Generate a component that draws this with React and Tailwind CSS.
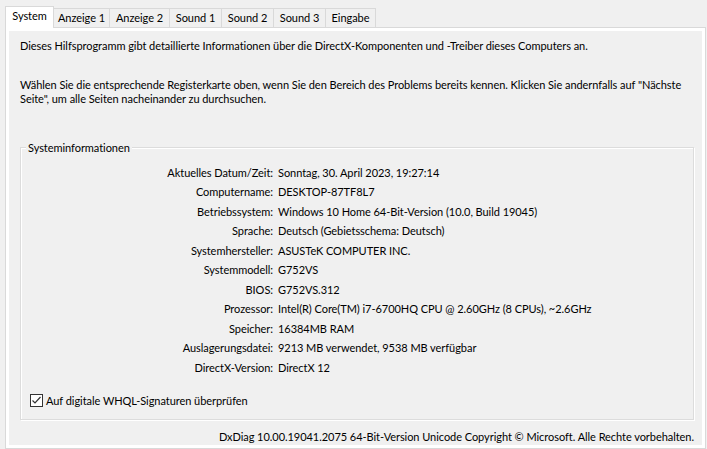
import React from "react";

const tabs = ["System", "Anzeige 1", "Anzeige 2", "Sound 1", "Sound 2", "Sound 3", "Eingabe"];
const tabWidths = [49, 56, 60, 52, 52, 52, 50];

const rows = [
  ["Aktuelles Datum/Zeit:", "Sonntag, 30. April 2023, 19:27:14"],
  ["Computername:", "DESKTOP-87TF8L7"],
  ["Betriebssystem:", "Windows 10 Home 64-Bit-Version (10.0, Build 19045)"],
  ["Sprache:", "Deutsch (Gebietsschema: Deutsch)"],
  ["Systemhersteller:", "ASUSTeK COMPUTER INC."],
  ["Systemmodell:", "G752VS"],
  ["BIOS:", "G752VS.312"],
  ["Prozessor:", "Intel(R) Core(TM) i7-6700HQ CPU @ 2.60GHz (8 CPUs), ~2.6GHz"],
  ["Speicher:", "16384MB RAM"],
  ["Auslagerungsdatei:", "9213 MB verwendet, 9538 MB verfügbar"],
  ["DirectX-Version:", "DirectX 12"],
];

export default function App() {
  return (
    <div
      className="w-[707px] h-[449px] bg-[#f0f0f0] text-black text-[11px] tracking-[-0.05px] flex flex-col overflow-hidden"
      style={{ fontFamily: 'Lato, "Noto Sans", sans-serif' }}
    >
      <div className="flex items-end h-[22px] mt-[5px] ml-[5px] relative z-10">
        {tabs.map((t, i) =>
          i === 0 ? (
            <div
              key={t}
              style={{ width: tabWidths[i] }}
              className="h-[22px] -mb-px bg-white border border-b-0 border-[#d9d9d9] flex items-center justify-center pb-[2px]"
            >
              {t}
            </div>
          ) : (
            <div
              key={t}
              style={{ width: tabWidths[i] }}
              className="h-[19px] bg-[#f0f0f0] border border-l-0 border-b-0 border-[#d9d9d9] flex items-center justify-center"
            >
              {t}
            </div>
          )
        )}
      </div>
      <div className="ml-[5px] mr-[1px] flex-1 border border-[#d9d9d9] bg-white p-[3px] flex">
        <div className="flex-1 bg-[#f0f0f0] flex flex-col pl-[11px] pr-[8px]">
          <p className="mt-[7px] leading-[15px] whitespace-nowrap">
            Dieses Hilfsprogramm gibt detaillierte Informationen über die DirectX-Komponenten und -Treiber dieses Computers an.
          </p>
          <p className="mt-[25px] leading-[14px] whitespace-nowrap">
            Wählen Sie die entsprechende Registerkarte oben, wenn Sie den Bereich des Problems bereits kennen. Klicken Sie andernfalls auf "Nächste
            <br />
            Seite", um alle Seiten nacheinander zu durchsuchen.
          </p>
          <div className="mt-[41px] h-[273px] shrink-0 border border-[#dcdcdc] shadow-[inset_1px_1px_0_#ffffff,1px_1px_0_#ffffff] flex flex-col relative">
            <span className="absolute -top-[8px] left-[5px] px-[2px] leading-[15px] bg-[#f0f0f0]">Systeminformationen</span>
            <div className="mt-[15px] flex flex-col">
              {rows.map(([k, v]) => (
                <div key={k} className="flex h-[19.5px] items-center">
                  <div className="w-[252px] text-right whitespace-nowrap">{k}</div>
                  <div className="ml-[5px] whitespace-nowrap">{v}</div>
                </div>
              ))}
            </div>
            <label className="mt-[15px] ml-[9px] flex items-center gap-[3px]">
              <span className="w-[13px] h-[13px] border border-[#333333] bg-white flex items-center justify-center">
                <svg width="11" height="11" viewBox="0 0 11 11">
                  <path d="M1.5 5.5 L4 8 L9.5 2" fill="none" stroke="#333333" strokeWidth="1.2" />
                </svg>
              </span>
              <span>Auf digitale WHQL-Signaturen überprüfen</span>
            </label>
          </div>
          <div className="mt-[9px] text-right leading-[15px] whitespace-nowrap">
            DxDiag 10.00.19041.2075 64-Bit-Version Unicode Copyright © Microsoft. Alle Rechte vorbehalten.
          </div>
        </div>
      </div>
    </div>
  );
}
